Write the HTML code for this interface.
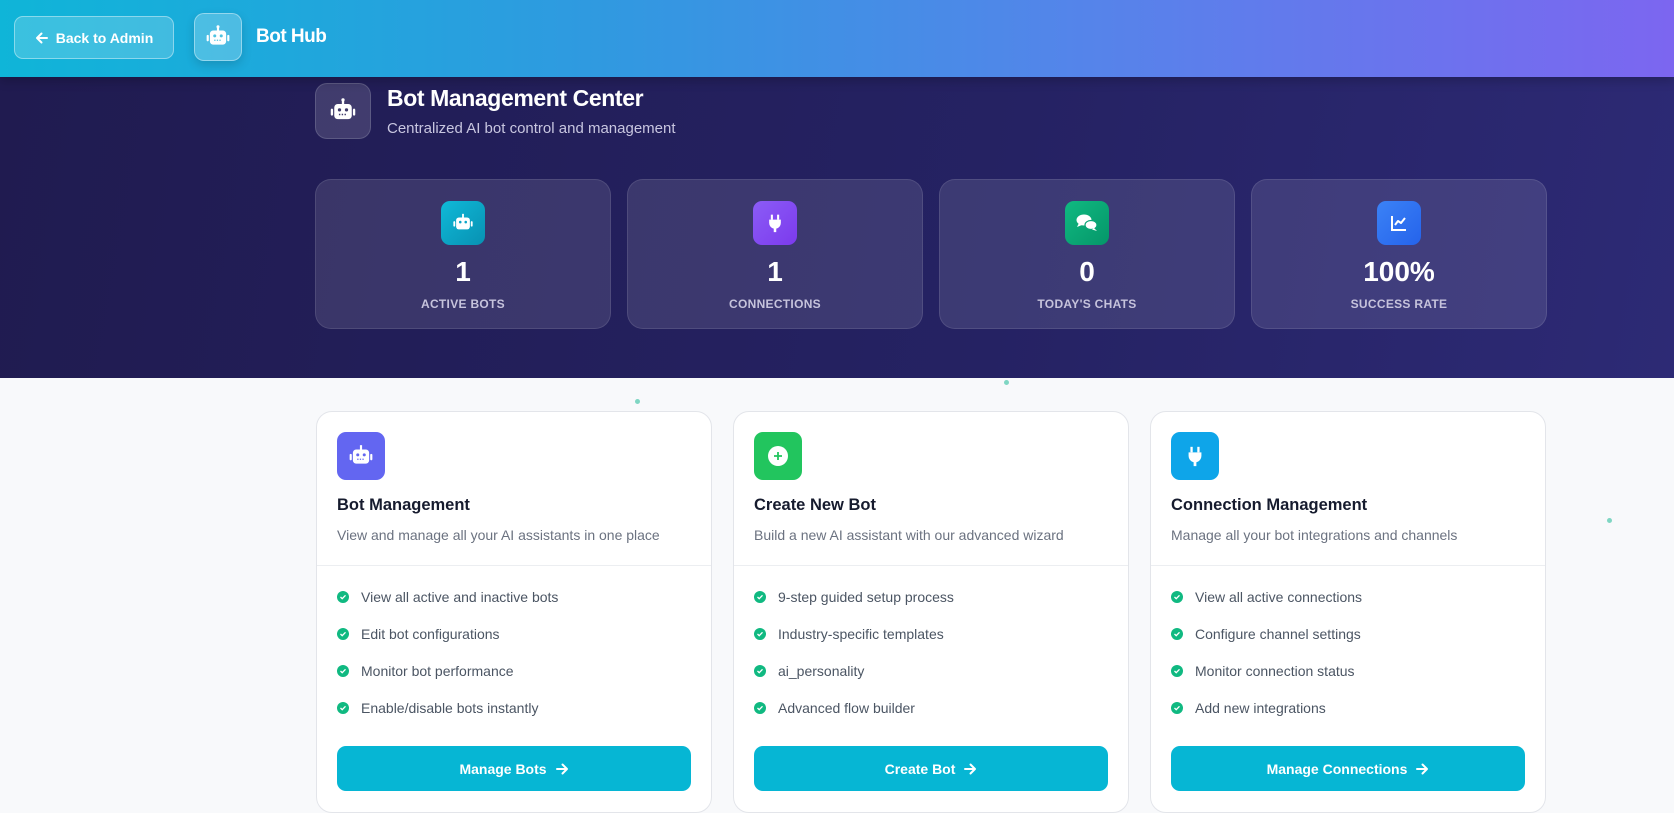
<!DOCTYPE html>
<html><head><meta charset="utf-8"><style>
*{box-sizing:border-box;margin:0;padding:0}
body{width:1674px;height:811px;overflow:hidden;font-family:"Liberation Sans",sans-serif;background:#f8f9fb;position:relative}
.hdr{position:absolute;left:0;top:0;width:1674px;height:77px;background:linear-gradient(90deg,#0fb5d8 0%,#2f9ae0 35%,#5584ea 65%,#7c66f0 100%);box-shadow:0 4px 10px rgba(0,0,0,.2);z-index:2}
.back{position:absolute;left:14px;top:16px;width:160px;height:43px;border:1px solid rgba(255,255,255,.4);background:rgba(255,255,255,.18);border-radius:9px;color:#fff;font-weight:bold;font-size:14px;display:flex;align-items:center;justify-content:center;gap:7px}
.logo{position:absolute;left:194px;top:13px;width:48px;height:48px;border-radius:10px;background:rgba(255,255,255,.22);border:1px solid rgba(255,255,255,.4);display:flex;align-items:center;justify-content:center;box-shadow:0 4px 10px rgba(0,0,0,.15)}
.hub{position:absolute;left:256px;top:26px;color:#fff;font-weight:bold;font-size:19px;letter-spacing:-.5px}
.dark{position:absolute;left:0;top:77px;width:1674px;height:301px;background:linear-gradient(100deg,#201b50 0%,#252263 60%,#2d2a75 100%)}
.ticon{position:absolute;left:315px;top:83px;width:56px;height:56px;border-radius:12px;background:rgba(255,255,255,.14);border:1px solid rgba(255,255,255,.15);display:flex;align-items:center;justify-content:center}
.title{position:absolute;left:387px;top:85px;color:#fff;font-weight:bold;font-size:23px;letter-spacing:-.4px}
.sub{position:absolute;left:387px;top:120px;color:#c8c6e0;font-size:15px}
.stat{position:absolute;top:179px;width:296px;height:150px;border-radius:16px;background:rgba(255,255,255,.11);border:1px solid rgba(255,255,255,.1);text-align:center;color:#fff}
.stat .ic{width:44px;height:44px;border-radius:9px;margin:21px auto 0;display:flex;align-items:center;justify-content:center}
.stat .n{font-size:28px;font-weight:bold;margin-top:10px;line-height:34px}
.stat .l{font-size:12px;font-weight:bold;color:#c6c3dc;margin-top:8px;letter-spacing:.3px}
.card{position:absolute;top:411px;width:396px;height:402px;background:#fff;border:1px solid #e3e5ea;border-radius:16px}
.card .ic{position:absolute;left:20px;top:20px;width:48px;height:48px;border-radius:9px;display:flex;align-items:center;justify-content:center}
.card h3{position:absolute;left:20px;top:84px;font-size:16.5px;font-weight:bold;color:#161b2e}
.card .d{position:absolute;left:20px;top:115px;font-size:14px;color:#6b7280}
.card .hr{position:absolute;left:0;right:0;top:153px;border-top:1px solid #eceef1}
.card ul{position:absolute;left:20px;top:166px;list-style:none}
.card li{height:37px;font-size:14px;color:#4b5563;display:flex;align-items:center;gap:12px}
.ck{width:12px;height:12px;border-radius:50%;background:#10b981;display:flex;align-items:center;justify-content:center}
.btn{position:absolute;left:20px;right:20px;top:334px;height:45px;border-radius:9px;background:#06b6d4;color:#fff;font-weight:bold;font-size:14px;display:flex;align-items:center;justify-content:center;gap:8px}
.dot{position:absolute;width:5px;height:5px;border-radius:50%;background:#7fd6c3}
</style></head><body>
<div class="hdr">
<div class="back"><svg width="14" height="14" viewBox="0 0 14 14"><path d="M12 7H2M6.5 2.5L2 7l4.5 4.5" stroke="#fff" stroke-width="2" fill="none" stroke-linecap="round" stroke-linejoin="round"/></svg>Back to Admin</div>
<div class="logo"><svg width="26" height="26" viewBox="0 0 24 24"><rect x="11" y="2" width="2" height="4" fill="#fff"/><circle cx="12" cy="2.5" r="1.4" fill="#fff"/><rect x="4.5" y="6" width="15" height="13" rx="3" fill="#fff"/><rect x="1.5" y="10" width="2" height="6" rx="1" fill="#fff"/><rect x="20.5" y="10" width="2" height="6" rx="1" fill="#fff"/><circle cx="9" cy="11" r="1.4" fill="#4fc3e2"/><circle cx="15" cy="11" r="1.4" fill="#4fc3e2"/><path d="M8.5 15h7" stroke="#4fc3e2" stroke-width="1.2" stroke-dasharray="1.2 1.2"/></svg></div>
<div class="hub">Bot Hub</div>
</div>
<div class="dark"></div>
<div class="ticon"><svg width="28" height="28" viewBox="0 0 24 24"><rect x="11" y="2" width="2" height="4" fill="#fff"/><circle cx="12" cy="2.5" r="1.4" fill="#fff"/><rect x="4.5" y="6" width="15" height="13" rx="3" fill="#fff"/><rect x="1.5" y="10" width="2" height="6" rx="1" fill="#fff"/><rect x="20.5" y="10" width="2" height="6" rx="1" fill="#fff"/><circle cx="9" cy="11" r="1.4" fill="#3f3a6a"/><circle cx="15" cy="11" r="1.4" fill="#3f3a6a"/><path d="M8.5 15h7" stroke="#3f3a6a" stroke-width="1.2" stroke-dasharray="1.2 1.2"/></svg></div>
<div class="title">Bot Management Center</div>
<div class="sub">Centralized AI bot control and management</div>

<div class="stat" style="left:315px"><div class="ic" style="background:linear-gradient(135deg,#0fb9d8,#0891b2)"><svg width="22" height="22" viewBox="0 0 24 24"><rect x="11" y="2" width="2" height="4" fill="#fff"/><rect x="4.5" y="6" width="15" height="13" rx="3" fill="#fff"/><rect x="1.5" y="10" width="2" height="6" rx="1" fill="#fff"/><rect x="20.5" y="10" width="2" height="6" rx="1" fill="#fff"/><circle cx="9" cy="11" r="1.4" fill="#0aa5c8"/><circle cx="15" cy="11" r="1.4" fill="#0aa5c8"/></svg></div><div class="n">1</div><div class="l">ACTIVE BOTS</div></div>
<div class="stat" style="left:627px"><div class="ic" style="background:linear-gradient(135deg,#8b5cf6,#7c3aed)"><svg width="20" height="20" viewBox="0 0 24 24"><rect x="7" y="2" width="2.5" height="6" fill="#fff"/><rect x="14.5" y="2" width="2.5" height="6" fill="#fff"/><path d="M5 8h14v4a7 7 0 0 1-5.5 6.8V23h-3v-4.2A7 7 0 0 1 5 12z" fill="#fff"/></svg></div><div class="n">1</div><div class="l">CONNECTIONS</div></div>
<div class="stat" style="left:939px"><div class="ic" style="background:linear-gradient(135deg,#10b981,#059669)"><svg width="24" height="22" viewBox="0 0 24 22"><ellipse cx="9" cy="8" rx="7.5" ry="5.5" fill="#fff"/><path d="M4 11l-2 4 5-2z" fill="#fff"/><ellipse cx="16" cy="13" rx="6" ry="4.5" fill="#fff" stroke="#0ca678" stroke-width="1.2"/><path d="M19 16l3 3-5-1.5z" fill="#fff"/></svg></div><div class="n">0</div><div class="l">TODAY'S CHATS</div></div>
<div class="stat" style="left:1251px"><div class="ic" style="background:linear-gradient(135deg,#3b82f6,#2563eb)"><svg width="20" height="20" viewBox="0 0 20 20"><path d="M3 3v14h14" stroke="#fff" stroke-width="2" fill="none"/><path d="M6 12l3-4 3 2 4-5" stroke="#fff" stroke-width="2" fill="none" stroke-linejoin="round"/></svg></div><div class="n">100%</div><div class="l">SUCCESS RATE</div></div>

<div class="dot" style="left:635px;top:399px"></div>
<div class="dot" style="left:1004px;top:380px"></div>
<div class="dot" style="left:1607px;top:518px"></div>

<div class="card" style="left:316px"><div class="ic" style="background:#6366f1"><svg width="26" height="26" viewBox="0 0 24 24"><rect x="11" y="2" width="2" height="4" fill="#fff"/><rect x="4.5" y="6" width="15" height="13" rx="3" fill="#fff"/><rect x="1.5" y="10" width="2" height="6" rx="1" fill="#fff"/><rect x="20.5" y="10" width="2" height="6" rx="1" fill="#fff"/><circle cx="9" cy="11" r="1.4" fill="#6366f1"/><circle cx="15" cy="11" r="1.4" fill="#6366f1"/><path d="M8.5 15h7" stroke="#6366f1" stroke-width="1.2" stroke-dasharray="1.2 1.2"/></svg></div>
<h3>Bot Management</h3><div class="d">View and manage all your AI assistants in one place</div><div class="hr"></div>
<ul><li><span class="ck"><svg width="8" height="8" viewBox="0 0 8 8"><path d="M1.5 4l1.7 1.7L6.5 2.3" stroke="#fff" stroke-width="1.3" fill="none"/></svg></span>View all active and inactive bots</li><li><span class="ck"><svg width="8" height="8" viewBox="0 0 8 8"><path d="M1.5 4l1.7 1.7L6.5 2.3" stroke="#fff" stroke-width="1.3" fill="none"/></svg></span>Edit bot configurations</li><li><span class="ck"><svg width="8" height="8" viewBox="0 0 8 8"><path d="M1.5 4l1.7 1.7L6.5 2.3" stroke="#fff" stroke-width="1.3" fill="none"/></svg></span>Monitor bot performance</li><li><span class="ck"><svg width="8" height="8" viewBox="0 0 8 8"><path d="M1.5 4l1.7 1.7L6.5 2.3" stroke="#fff" stroke-width="1.3" fill="none"/></svg></span>Enable/disable bots instantly</li></ul>
<div class="btn">Manage Bots <svg width="14" height="14" viewBox="0 0 14 14"><path d="M2 7h10M7.5 2.5L12 7l-4.5 4.5" stroke="#fff" stroke-width="2" fill="none" stroke-linecap="round" stroke-linejoin="round"/></svg></div></div>

<div class="card" style="left:733px"><div class="ic" style="background:#22c55e"><svg width="22" height="22" viewBox="0 0 22 22"><circle cx="11" cy="11" r="10" fill="#fff"/><path d="M11 7v8M7 11h8" stroke="#22c55e" stroke-width="1.8"/></svg></div>
<h3>Create New Bot</h3><div class="d">Build a new AI assistant with our advanced wizard</div><div class="hr"></div>
<ul><li><span class="ck"><svg width="8" height="8" viewBox="0 0 8 8"><path d="M1.5 4l1.7 1.7L6.5 2.3" stroke="#fff" stroke-width="1.3" fill="none"/></svg></span>9-step guided setup process</li><li><span class="ck"><svg width="8" height="8" viewBox="0 0 8 8"><path d="M1.5 4l1.7 1.7L6.5 2.3" stroke="#fff" stroke-width="1.3" fill="none"/></svg></span>Industry-specific templates</li><li><span class="ck"><svg width="8" height="8" viewBox="0 0 8 8"><path d="M1.5 4l1.7 1.7L6.5 2.3" stroke="#fff" stroke-width="1.3" fill="none"/></svg></span>ai_personality</li><li><span class="ck"><svg width="8" height="8" viewBox="0 0 8 8"><path d="M1.5 4l1.7 1.7L6.5 2.3" stroke="#fff" stroke-width="1.3" fill="none"/></svg></span>Advanced flow builder</li></ul>
<div class="btn">Create Bot <svg width="14" height="14" viewBox="0 0 14 14"><path d="M2 7h10M7.5 2.5L12 7l-4.5 4.5" stroke="#fff" stroke-width="2" fill="none" stroke-linecap="round" stroke-linejoin="round"/></svg></div></div>

<div class="card" style="left:1150px"><div class="ic" style="background:#0ea5e9"><svg width="22" height="22" viewBox="0 0 24 24"><rect x="7" y="2" width="2.5" height="6" fill="#fff"/><rect x="14.5" y="2" width="2.5" height="6" fill="#fff"/><path d="M5 8h14v4a7 7 0 0 1-5.5 6.8V23h-3v-4.2A7 7 0 0 1 5 12z" fill="#fff"/></svg></div>
<h3>Connection Management</h3><div class="d">Manage all your bot integrations and channels</div><div class="hr"></div>
<ul><li><span class="ck"><svg width="8" height="8" viewBox="0 0 8 8"><path d="M1.5 4l1.7 1.7L6.5 2.3" stroke="#fff" stroke-width="1.3" fill="none"/></svg></span>View all active connections</li><li><span class="ck"><svg width="8" height="8" viewBox="0 0 8 8"><path d="M1.5 4l1.7 1.7L6.5 2.3" stroke="#fff" stroke-width="1.3" fill="none"/></svg></span>Configure channel settings</li><li><span class="ck"><svg width="8" height="8" viewBox="0 0 8 8"><path d="M1.5 4l1.7 1.7L6.5 2.3" stroke="#fff" stroke-width="1.3" fill="none"/></svg></span>Monitor connection status</li><li><span class="ck"><svg width="8" height="8" viewBox="0 0 8 8"><path d="M1.5 4l1.7 1.7L6.5 2.3" stroke="#fff" stroke-width="1.3" fill="none"/></svg></span>Add new integrations</li></ul>
<div class="btn">Manage Connections <svg width="14" height="14" viewBox="0 0 14 14"><path d="M2 7h10M7.5 2.5L12 7l-4.5 4.5" stroke="#fff" stroke-width="2" fill="none" stroke-linecap="round" stroke-linejoin="round"/></svg></div></div>
</body></html>
